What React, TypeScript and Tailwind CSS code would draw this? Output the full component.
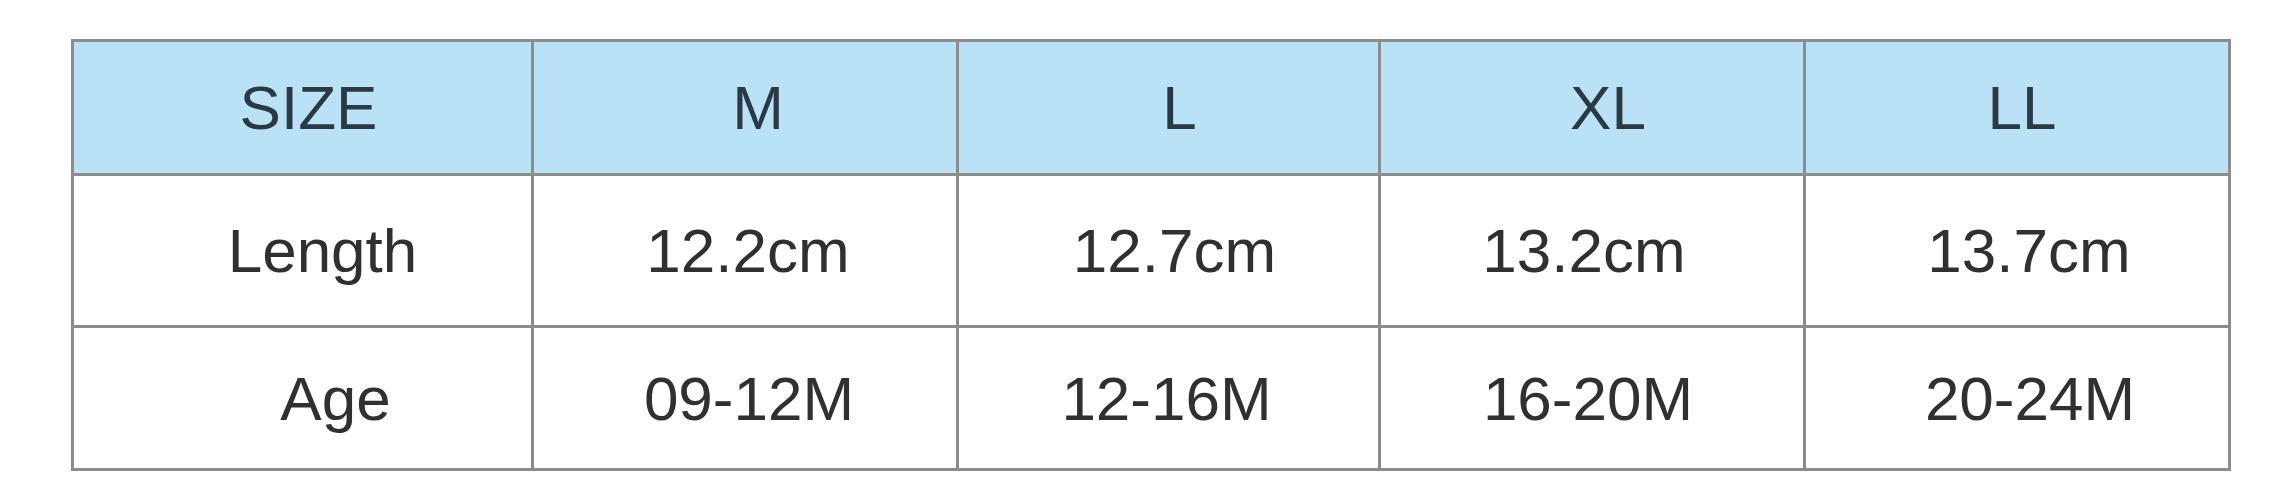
// Size chart table

type Cell = { text: string; shift: string }

const header: Cell[] = [
  { text: 'SIZE', shift: 'pl-[12px]' },
  { text: 'M', shift: 'pl-[26px]' },
  { text: 'L', shift: 'pl-[22px]' },
  { text: 'XL', shift: 'pl-[32px]' },
  { text: 'LL', shift: 'pl-[10px]' },
]

const rows: Cell[][] = [
  [
    { text: 'Length', shift: 'pl-[40px]' },
    { text: '12.2cm', shift: 'pl-[6px]' },
    { text: '12.7cm', shift: 'pl-[12px]' },
    { text: '13.2cm', shift: 'pr-[16px]' },
    { text: '13.7cm', shift: 'pl-[24px]' },
  ],
  [
    { text: 'Age', shift: 'pl-[66px]' },
    { text: '09-12M', shift: 'pl-[8px]' },
    { text: '12-16M', shift: 'pr-[4px]' },
    { text: '16-20M', shift: 'pr-[8px]' },
    { text: '20-24M', shift: 'pl-[26px]' },
  ],
]

export default function App() {
  return (
    <div className="w-[2290px] h-[500px] bg-white pt-[39px] pl-[71px] font-['Liberation_Sans',Arial,sans-serif]">
      <div className="grid w-max grid-cols-[460px_425px_422px_425px_425px] grid-rows-[134px_152px_143px] border-r-[3px] border-b-[3px] border-[#8c8c8c]">
        {header.map((c) => (
          <div
            key={c.text}
            className={`flex items-center justify-center border-l-[3px] border-t-[3px] border-[#8c8c8c] bg-[#b9e2f7] text-[62px] text-[#2b3944] ${c.shift}`}
          >
            {c.text}
          </div>
        ))}
        {rows.map((row) =>
          row.map((c) => (
            <div
              key={c.text}
              className={`flex items-center justify-center border-l-[3px] border-t-[3px] border-[#8c8c8c] bg-white text-[62px] text-[#303030] ${c.shift}`}
            >
              {c.text}
            </div>
          ))
        )}
      </div>
    </div>
  )
}
